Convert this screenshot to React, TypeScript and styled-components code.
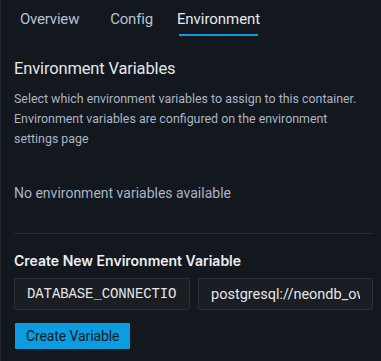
import React from "react";
import styled, { createGlobalStyle } from "styled-components";

const Global = createGlobalStyle`
  html, body { margin: 0; padding: 0; background: #13171e; }
  body { font-family: Roboto, "Noto Sans", sans-serif; -webkit-font-smoothing: antialiased; }
  * { box-sizing: border-box; }
`;

const Panel = styled.div`
  width: 381px;
  height: 361px;
  background: #13171e;
  border-left: 1px solid #22262d;
  overflow: hidden;
`;

const TabBar = styled.div`
  display: flex;
  align-items: flex-start;
  padding-left: 19px;
  height: 40px;
`;

const Tab = styled.div<{ $active?: boolean; $gap: number }>`
  position: relative;
  font-size: 15px;
  letter-spacing: ${(p) => (p.$active ? "-0.05px" : "-0.2px")};
  line-height: 18px;
  padding-top: 10px;
  height: 38px;
  margin-right: ${(p) => p.$gap}px;
  color: ${(p) => (p.$active ? "#e6e9ee" : "#b4c2d6")};
  &::after {
    content: "";
    display: ${(p) => (p.$active ? "block" : "none")};
    position: absolute;
    left: 2px;
    right: 2px;
    top: 34px;
    height: 2px;
    background: #0c9ce0;
  }
`;

const Content = styled.div`
  padding: 18px 8px 0 13px;
`;

const Heading = styled.h2`
  margin: 0;
  font-size: 16.5px;
  letter-spacing: -0.15px;
  font-weight: 400;
  line-height: 22px;
  color: #e3e6ea;
`;

const Description = styled.p`
  margin: 9px 0 0;
  font-size: 12.4px;
  line-height: 20px;
  color: #aab5c4;
`;

const Empty = styled.p`
  margin: 34px 0 0;
  font-size: 14px;
  line-height: 20px;
  color: #aab5c4;
`;

const Divider = styled.hr`
  margin: 30px 0 0;
  border: none;
  height: 1px;
  background: #262a31;
`;

const SubHeading = styled.h3`
  margin: 17px 0 0;
  font-family: Inter, Roboto, sans-serif;
  font-size: 14px;
  font-weight: 600;
  line-height: 20px;
  color: #eceef1;
`;

const InputRow = styled.div`
  display: grid;
  grid-template-columns: 176px 175px;
  gap: 8px;
  margin-top: 7px;
`;

const Input = styled.input<{ $mono?: boolean }>`
  height: 32px;
  width: 100%;
  background: #1a1d22;
  border: 1px solid #2a2e35;
  border-radius: 2px;
  color: #e4e6ea;
  outline: none;
  padding: 0 12px;
  font-size: ${(p) => (p.$mono ? "14px" : "14.5px")};
  font-family: ${(p) => (p.$mono ? '"Liberation Mono", "DejaVu Sans Mono", monospace' : 'Roboto, "Noto Sans", sans-serif')};
  letter-spacing: ${(p) => (p.$mono ? "-0.1px" : "0")};
`;

const Button = styled.button`
  margin-top: 13px;
  margin-left: 1px;
  height: 26px;
  padding: 0 11px;
  border: none;
  border-radius: 1px;
  background: #0c9ce0;
  color: #0c1a26;
  font-family: Roboto, "Noto Sans", sans-serif;
  font-size: 14px;
  letter-spacing: -0.1px;
`;

export default function App() {
  return (
    <>
      <Global />
      <Panel>
        <TabBar>
          <Tab $gap={31}>Overview</Tab>
          <Tab $gap={24}>Config</Tab>
          <Tab $active $gap={0}>Environment</Tab>
        </TabBar>
        <Content>
          <Heading>Environment Variables</Heading>
          <Description>
            Select which environment variables to assign to this container.
            Environment variables are configured on the environment settings page
          </Description>
          <Empty>No environment variables available</Empty>
          <Divider />
          <SubHeading>Create New Environment Variable</SubHeading>
          <InputRow>
            <Input $mono defaultValue="DATABASE_CONNECTION_STRING" />
            <Input defaultValue="postgresql://neondb_owner:password@host/neondb" />
          </InputRow>
          <Button>Create Variable</Button>
        </Content>
      </Panel>
    </>
  );
}
